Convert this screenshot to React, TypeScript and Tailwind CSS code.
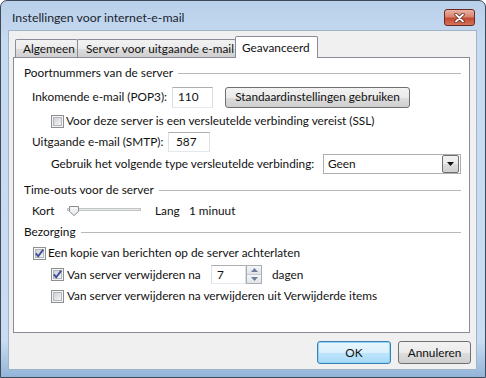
import React from "react";

function Check({ checked }: { checked?: boolean }) {
  return (
    <svg width="13" height="13" viewBox="0 0 13 13" className="shrink-0">
      <defs>
        <linearGradient id={checked ? "cbg1" : "cbg0"} x1="0" y1="0" x2="1" y2="1">
          <stop offset="0" stopColor="#cbcfd5" />
          <stop offset="1" stopColor="#f7f7f7" />
        </linearGradient>
      </defs>
      <rect x="0.5" y="0.5" width="12" height="12" fill="#f5f5f5" stroke="#8e8f8f" />
      <rect x="2.5" y="2.5" width="8" height="8" fill={`url(#${checked ? "cbg1" : "cbg0"})`} stroke="#b3b6bb" />
      {checked && <path d="M2.8 6.4 L5.2 9.2 L10.2 2.6" stroke="#414f9a" strokeWidth="1.9" fill="none" />}
    </svg>
  );
}

function GroupHeader({ title }: { title: string }) {
  return (
    <div className="h-[20px] flex items-center pl-[10px] pr-[8px]">
      <span>{title}</span>
      <div className="flex-1 ml-[5px] h-px bg-[#b5b9bd]" />
    </div>
  );
}

const inputCls =
  "bg-white border border-[#dbdfe6] border-t-[#abadb3] border-b-[#e3e9ef] flex items-center";

const btnCls =
  "flex items-center justify-center rounded-[3px] border border-[#707070] bg-[linear-gradient(#f2f2f2_0%,#ebebeb_50%,#dddddd_51%,#cfcfcf_100%)]";

export default function App() {
  return (
    <div className="w-[486px] h-[378px] overflow-hidden">
      <div className="w-[486px] h-[378px] flex flex-col border border-[#3f4a57] rounded-t-[7px] bg-[linear-gradient(#b9d0ea_0px,#c6daf0_40px,#c9dcf1_340px,#8fb2d8_378px)] font-['Lato',sans-serif] text-[11.8px] leading-[16px] text-[#111] whitespace-nowrap">
        {/* title bar */}
        <div className="h-[29px] flex items-start">
          <div className="ml-[11px] mt-[9px] text-[12.3px] text-[#1b2430]">Instellingen voor internet-e-mail</div>
          <div className="ml-auto mr-[10px] mt-[8px] w-[31px] h-[17px] rounded-[3px] border border-[#6a2a23] bg-[linear-gradient(#eab2a4_0%,#d98470_45%,#c24a32_55%,#d6735a_100%)] flex items-center justify-center">
            <svg width="11" height="10" viewBox="0 0 11 10">
              <path d="M2 1.5 L9 8.5 M9 1.5 L2 8.5" stroke="#5c1e16" strokeWidth="3.2" strokeLinecap="round" />
              <path d="M2 1.5 L9 8.5 M9 1.5 L2 8.5" stroke="#ffffff" strokeWidth="1.8" strokeLinecap="round" />
            </svg>
          </div>
        </div>

        {/* client */}
        <div className="ml-[7px] mr-[8px] h-[340px] bg-[#f0f0f0] border border-[#9fb3ca] flex flex-col">
          {/* tabs */}
          <div className="ml-[6px] mt-[5px] h-[21px] flex items-end">
            <div className="h-[18px] w-[63px] border border-b-0 border-[#898c95] rounded-t-[2px] bg-[linear-gradient(#f2f2f2_0%,#ebebeb_50%,#dddddd_51%,#cfcfcf_100%)] pl-[7px] flex items-center">
              Algemeen
            </div>
            <div className="h-[18px] w-[159px] -ml-px border border-b-0 border-[#898c95] rounded-t-[2px] bg-[linear-gradient(#f2f2f2_0%,#ebebeb_50%,#dddddd_51%,#cfcfcf_100%)] pl-[8px] flex items-center">
              Server voor uitgaande e-mail
            </div>
            <div className="relative z-10 -mb-px h-[22px] w-[83px] -ml-px border border-b-0 border-[#898c95] rounded-t-[2px] bg-white pl-[6px] flex items-center">
              Geavanceerd
            </div>
          </div>

          {/* panel */}
          <div className="ml-[4px] w-[457px] h-[276px] bg-white border border-[#898c95] pt-[5px] flex flex-col">
            <GroupHeader title="Poortnummers van de server" />

            <div className="mt-[3px] h-[22px] flex items-center pl-[18px]">
              <span className="w-[140px]">Inkomende e-mail (POP3):</span>
              <div className={`${inputCls} w-[41px] h-[21px] pl-[5px]`}>110</div>
              <div className={`${btnCls} ml-[12px] w-[185px] h-[21px]`}>Standaardinstellingen gebruiken</div>
            </div>

            <div className="mt-[3px] h-[20px] flex items-center pl-[37px]">
              <Check />
              <span className="ml-[2px]">Voor deze server is een versleutelde verbinding vereist (SSL)</span>
            </div>

            <div className="mt-[1px] h-[20px] flex items-center pl-[18px]">
              <span className="w-[136px]">Uitgaande e-mail (SMTP):</span>
              <div className={`${inputCls} w-[42px] h-[20px] pl-[7px]`}>587</div>
            </div>

            <div className="h-[24px] flex items-center pl-[37px]">
              <span className="w-[272px]">Gebruik het volgende type versleutelde verbinding:</span>
              <div className="w-[138px] h-[20px] bg-white border border-[#abadb3] flex items-center pl-[4px] pr-px">
                <span className="flex-1">Geen</span>
                <div className="w-[17px] h-[18px] border border-[#707070] rounded-[2px] bg-[linear-gradient(#f2f2f2_0%,#ebebeb_50%,#dddddd_51%,#cfcfcf_100%)] flex items-center justify-center">
                  <svg width="7" height="4" viewBox="0 0 7 4">
                    <path d="M0 0 H7 L3.5 4 Z" fill="#111" />
                  </svg>
                </div>
              </div>
            </div>

            <div className="mt-[4px]">
              <GroupHeader title="Time-outs voor de server" />
            </div>

            <div className="mt-[1px] h-[20px] flex items-center pl-[18px]">
              <span className="w-[35px]">Kort</span>
              <svg width="74" height="12" viewBox="0 0 74 12" className="shrink-0">
                <rect x="0.5" y="3.5" width="73" height="2" fill="#e7eaea" stroke="#c2c4c6" />
                <path d="M2.5 1.5 H11.5 V6.5 L7 10.5 L2.5 6.5 Z" fill="#eef0f2" stroke="#8b8f94" />
                <path d="M4 3 H10" stroke="#ffffff" />
              </svg>
              <span className="ml-[14px] w-[34px]">Lang</span>
              <span>1 minuut</span>
            </div>

            <div className="mt-[1px]">
              <GroupHeader title="Bezorging" />
            </div>

            <div className="mt-[1px] h-[20px] flex items-center pl-[19px]">
              <Check checked />
              <span className="ml-[2px]">Een kopie van berichten op de server achterlaten</span>
            </div>

            <div className="mt-[1px] h-[21px] flex items-center pl-[37px]">
              <Check checked />
              <span className="ml-[3px] w-[144px]">Van server verwijderen na</span>
              <div className={`${inputCls} w-[35px] h-[19px] pl-[5px]`}>7</div>
              <div className="w-[16px] h-[19px] border border-[#abadb3] flex flex-col bg-[#f4f4f4]">
                <div className="flex-1 flex items-center justify-center border-b border-[#c5c8cc] bg-[linear-gradient(#f4f6f8,#dfe3e8)]">
                  <svg width="7" height="4" viewBox="0 0 7 4">
                    <path d="M0 4 H7 L3.5 0 Z" fill="#6d7d9a" />
                  </svg>
                </div>
                <div className="flex-1 flex items-center justify-center bg-[linear-gradient(#f4f6f8,#dfe3e8)]">
                  <svg width="7" height="4" viewBox="0 0 7 4">
                    <path d="M0 0 H7 L3.5 4 Z" fill="#6d7d9a" />
                  </svg>
                </div>
              </div>
              <span className="ml-[10px]">dagen</span>
            </div>

            <div className="mt-[1px] h-[20px] flex items-center pl-[37px]">
              <Check />
              <span className="ml-[3px]">Van server verwijderen na verwijderen uit Verwijderde items</span>
            </div>
          </div>

          {/* buttons */}
          <div className="mt-[8px] flex justify-end gap-[7px] pr-[5px]">
            <div className="w-[74px] h-[23px] rounded-[3px] border border-[#3c7fb1] shadow-[inset_0_0_0_1px_#8fd4f5] bg-[linear-gradient(#eaf6fd_0%,#d9f0fc_50%,#bee6fd_51%,#a7d9f5_100%)] flex items-center justify-center">
              OK
            </div>
            <div className={`${btnCls} w-[73px] h-[23px]`}>Annuleren</div>
          </div>
        </div>
      </div>
    </div>
  );
}
